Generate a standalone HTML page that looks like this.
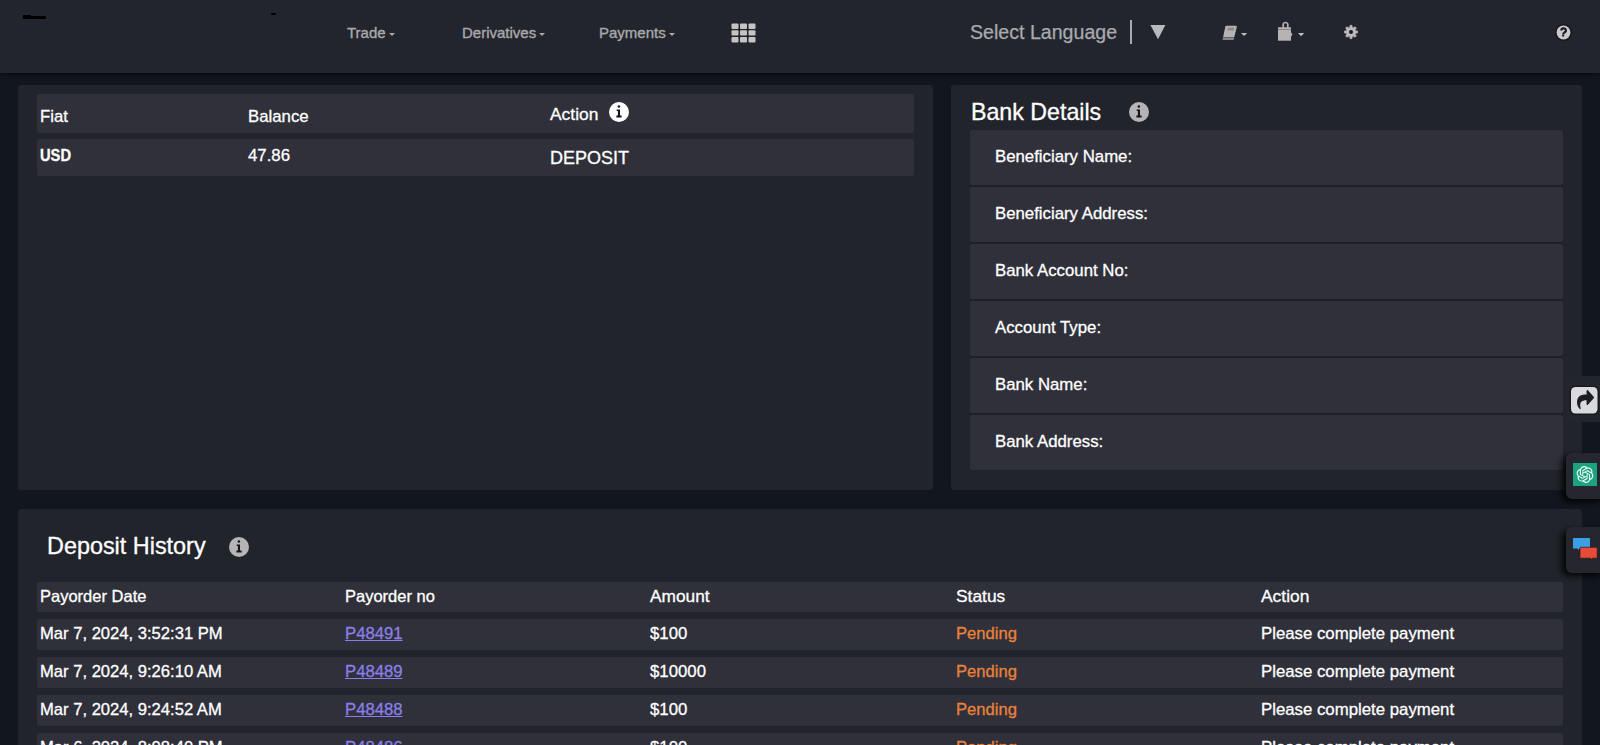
<!DOCTYPE html>
<html><head><meta charset="utf-8">
<style>
*{box-sizing:border-box;margin:0;padding:0}
html,body{width:1600px;height:745px;overflow:hidden;background:#12161f;font-family:"Liberation Sans",sans-serif;color:#fff}
.abs{position:absolute}
#hdr{position:absolute;left:0;top:0;width:1600px;height:73px;background:#23252e;box-shadow:0 2px 4px rgba(0,0,0,.5)}
.nav{position:absolute;top:24px;font-size:15px;color:#aaaaaa;white-space:nowrap;line-height:17px;-webkit-text-stroke:0.35px currentColor}
.caret{display:inline-block;width:0;height:0;border-left:3.5px solid transparent;border-right:3.5px solid transparent;border-top:3.5px solid #aaa;vertical-align:middle;margin-left:3px;margin-top:1px}
.card{position:absolute;background:#22242c;border-radius:3px}
.row{position:absolute;background:#30303a;border-radius:2px}
.t{position:absolute;white-space:nowrap;font-size:16.8px;line-height:20px;color:#fff;-webkit-text-stroke:0.3px currentColor}
.info{position:absolute;width:20px;height:20px}
.side{position:absolute;left:1566px;width:40px;height:46px;background:#26272e;border-radius:6px;box-shadow:-4px 3px 6px rgba(0,0,0,.85)}
</style></head><body>
<div id="hdr">
  <div class="abs" style="left:23px;top:15px;width:8px;height:4px;background:#000"></div>
  <div class="abs" style="left:31px;top:15.5px;width:8px;height:3.5px;background:#000"></div>
  <div class="abs" style="left:39px;top:16px;width:7px;height:2.5px;background:#000"></div>
  <div class="abs" style="left:271px;top:13px;width:5px;height:2px;border-radius:2px;background:#000"></div>

  <div class="nav" style="left:347px">Trade<span class="caret"></span></div>
  <div class="nav" style="left:462px">Derivatives<span class="caret"></span></div>
  <div class="nav" style="left:599px">Payments<span class="caret"></span></div>
  <svg class="abs" style="left:731px;top:23px" width="25" height="20" viewBox="0 0 25 20">
    <g fill="#c6c3c3">
      <rect x="0.5" y="0.5" width="7" height="5.5" rx="1"/><rect x="9" y="0.5" width="7" height="5.5" rx="1"/><rect x="17.5" y="0.5" width="7" height="5.5" rx="1"/>
      <rect x="0.5" y="7.3" width="7" height="5.3" rx="1"/><rect x="9" y="7.3" width="7" height="5.3" rx="1"/><rect x="17.5" y="7.3" width="7" height="5.3" rx="1"/>
      <rect x="0.5" y="14" width="7" height="5.5" rx="1"/><rect x="9" y="14" width="7" height="5.5" rx="1"/><rect x="17.5" y="14" width="7" height="5.5" rx="1"/>
    </g>
  </svg>
  <div class="abs" style="left:970px;top:20px;font-size:19.6px;line-height:24px;color:#a9aaad;white-space:nowrap;-webkit-text-stroke:0.25px currentColor">Select Language</div>
  <div class="abs" style="left:1130px;top:20px;width:2px;height:24px;background:#aaa"></div>
  <svg class="abs" style="left:1150px;top:24px" width="16" height="16" viewBox="0 0 16 16"><path d="M0.4 0.9 L15.4 0.9 L8 15.3 Z" fill="#b9b9c0"/></svg>
  <!-- book -->
  <svg class="abs" style="left:1220px;top:24px" width="30" height="18" viewBox="0 0 30 18">
    <path d="M5.5 2 Q6 1.8 6.8 1.8 L16 1.8 Q17.2 2 16.8 3 L14.2 13.5 L3 13.5 Z" fill="#b8b3b3"/>
    <path d="M8 3.5 L14.5 3.5 L13.8 6.5 L7.3 6.5 Z" fill="#8f8a8a"/>
    <path d="M3 13.5 L14.2 13.5 L13.8 15.7 L2.8 15.7 Q2.3 14.6 3 13.5 Z" fill="#5a5758"/>
    <path d="M2.8 14.4 L13.8 14.4 L13.6 15.6 L2.8 15.6 Z" fill="#c4c0c0"/>
    <path d="M21 9 L27.2 9 L24.1 12.1 Z" fill="#c0bdbd"/>
  </svg>
  <!-- bag -->
  <svg class="abs" style="left:1276px;top:20px" width="30" height="22" viewBox="0 0 30 22">
    <path d="M7.2 8 V4 A2.5 2.5 0 0 1 11.8 4 V8" stroke="#b8b3b3" stroke-width="1.7" fill="none"/>
    <rect x="2" y="7.3" width="13" height="13.4" fill="#b8b3b3"/>
    <rect x="2" y="9.2" width="13" height="0.8" fill="#7d797a"/>
    <path d="M15 13 Q16.4 14.5 15 16" stroke="#b8b3b3" stroke-width="1.2" fill="none"/>
    <path d="M22 13 L28.2 13 L25.1 16.2 Z" fill="#c0bdbd"/>
  </svg>
  <!-- gear -->
  <svg class="abs" style="left:1342.7px;top:24.4px" width="16" height="16" viewBox="0 0 16 16">
    <path d="M6.53 3.75 L7.07 1.37 L8.93 1.37 L9.47 3.75 L9.97 3.96 L12.03 2.65 L13.35 3.97 L12.04 6.03 L12.25 6.53 L14.63 7.07 L14.63 8.93 L12.25 9.47 L12.04 9.97 L13.35 12.03 L12.03 13.35 L9.97 12.04 L9.47 12.25 L8.93 14.63 L7.07 14.63 L6.53 12.25 L6.03 12.04 L3.97 13.35 L2.65 12.03 L3.96 9.97 L3.75 9.47 L1.37 8.93 L1.37 7.07 L3.75 6.53 L3.96 6.03 L2.65 3.97 L3.97 2.65 L6.03 3.96 Z" fill="#bdb8b9" stroke="#bdb8b9" stroke-width="0.6" stroke-linejoin="round"/>
    <circle cx="8" cy="8" r="2" fill="#1a1a1e"/>
  </svg>
  <!-- help -->
  <svg class="abs" style="left:1554.1px;top:23px" width="19" height="19" viewBox="0 0 19 19">
    <circle cx="9.5" cy="9.5" r="8.6" fill="#17181e"/>
    <circle cx="9.5" cy="9.5" r="6.9" fill="#cbc9ca"/>
    <path d="M7.3 7.5 A2.3 2.1 0 1 1 10.5 9.4 C9.6 9.9 9.3 10.4 9.2 11.4" stroke="#1d1e24" stroke-width="2.2" fill="none"/>
    <rect x="8.1" y="11.6" width="2.1" height="1.9" fill="#1d1e24"/>
  </svg>
</div>

<!-- left card -->
<div class="card" style="left:18px;top:85px;width:915px;height:405px"></div>
<div class="row" style="left:37px;top:94px;width:877px;height:39px"></div>
<div class="row" style="left:37px;top:139px;width:877px;height:37px"></div>
<div class="t" style="left:40px;top:107px">Fiat</div>
<div class="t" style="left:248px;top:107px">Balance</div>
<div class="t" style="left:550px;top:104px;font-size:17.4px">Action</div>
<div class="info" style="left:609.2px;top:101.8px"><svg width="20" height="20" viewBox="0 0 20 20"><circle cx="10" cy="10" r="10" fill="#ffffff"/><circle cx="9.9" cy="4.6" r="1.25" fill="#151518"/><path d="M7.7 7.4 H11 V13.6 H12.6 V15.4 H7.4 V13.6 H8.9 V9 H7.7 Z" fill="#151518"/></svg></div>
<div class="t" style="left:40px;top:146px;font-weight:bold;font-size:16.9px;transform:scaleX(0.87);transform-origin:0 0">USD</div>
<div class="t" style="left:248px;top:146px">47.86</div>
<div class="t" style="left:550px;top:146px;font-size:18px;line-height:24px">DEPOSIT</div>

<!-- right card -->
<div class="card" style="left:951px;top:85px;width:631px;height:405px"></div>
<div class="t" style="left:971px;top:99px;font-size:23.2px;line-height:26px">Bank Details</div>
<div class="info" style="left:1129px;top:102px"><svg width="20" height="20" viewBox="0 0 20 20"><circle cx="10" cy="10" r="10" fill="#b6b4b6"/><circle cx="9.9" cy="4.6" r="1.25" fill="#151518"/><path d="M7.7 7.4 H11 V13.6 H12.6 V15.4 H7.4 V13.6 H8.9 V9 H7.7 Z" fill="#151518"/></svg></div>
<div class="abs" style="left:970px;top:130px;width:593px;height:340px;background:#1f2027;border-radius:2px"></div>
<div class="row" style="left:970px;top:130px;width:593px;height:55px"></div>
<div class="row" style="left:970px;top:187px;width:593px;height:55px"></div>
<div class="row" style="left:970px;top:244px;width:593px;height:55px"></div>
<div class="row" style="left:970px;top:301px;width:593px;height:55px"></div>
<div class="row" style="left:970px;top:358px;width:593px;height:55px"></div>
<div class="row" style="left:970px;top:415px;width:593px;height:55px"></div>
<div class="t" style="left:995px;top:147px">Beneficiary Name:</div>
<div class="t" style="left:995px;top:204px">Beneficiary Address:</div>
<div class="t" style="left:995px;top:261px">Bank Account No:</div>
<div class="t" style="left:995px;top:318px">Account Type:</div>
<div class="t" style="left:995px;top:375px">Bank Name:</div>
<div class="t" style="left:995px;top:432px">Bank Address:</div>

<!-- bottom card -->
<div class="card" style="left:18px;top:509px;width:1564px;height:300px"></div>
<div class="t" style="left:47px;top:532px;font-size:23.4px;line-height:28px">Deposit History</div>
<div class="info" style="left:229px;top:537px"><svg width="20" height="20" viewBox="0 0 20 20"><circle cx="10" cy="10" r="10" fill="#b6b4b6"/><circle cx="9.9" cy="4.6" r="1.25" fill="#151518"/><path d="M7.7 7.4 H11 V13.6 H12.6 V15.4 H7.4 V13.6 H8.9 V9 H7.7 Z" fill="#151518"/></svg></div>
<div class="row" style="left:37px;top:582px;width:1526px;height:30px"></div>
<div class="row" style="left:37px;top:619px;width:1526px;height:31px"></div>
<div class="row" style="left:37px;top:657px;width:1526px;height:31px"></div>
<div class="row" style="left:37px;top:695px;width:1526px;height:31px"></div>
<div class="row" style="left:37px;top:733px;width:1526px;height:31px"></div>

<div class="t" style="left:40px;top:586px;font-size:16.5px">Payorder Date</div>
<div class="t" style="left:345px;top:586px;font-size:16.5px">Payorder no</div>
<div class="t" style="left:650px;top:586px;font-size:17.3px">Amount</div>
<div class="t" style="left:956px;top:586px;font-size:17.4px">Status</div>
<div class="t" style="left:1261px;top:586px;font-size:17.4px">Action</div>

<div class="t" style="left:40px;top:624px;font-size:16.6px">Mar 7, 2024, 3:52:31 PM</div>
<div class="t" style="left:345px;top:624px;color:#8a7ee8;text-decoration:underline;font-size:16.7px">P48491</div>
<div class="t" style="left:650px;top:624px">$100</div>
<div class="t" style="left:956px;top:624px;color:#e9823a;font-size:16.6px">Pending</div>
<div class="t" style="left:1261px;top:624px">Please complete payment</div>

<div class="t" style="left:40px;top:662px;font-size:16.6px">Mar 7, 2024, 9:26:10 AM</div>
<div class="t" style="left:345px;top:662px;color:#8a7ee8;text-decoration:underline;font-size:16.7px">P48489</div>
<div class="t" style="left:650px;top:662px">$10000</div>
<div class="t" style="left:956px;top:662px;color:#e9823a;font-size:16.6px">Pending</div>
<div class="t" style="left:1261px;top:662px">Please complete payment</div>

<div class="t" style="left:40px;top:700px;font-size:16.6px">Mar 7, 2024, 9:24:52 AM</div>
<div class="t" style="left:345px;top:700px;color:#8a7ee8;text-decoration:underline;font-size:16.7px">P48488</div>
<div class="t" style="left:650px;top:700px">$100</div>
<div class="t" style="left:956px;top:700px;color:#e9823a;font-size:16.6px">Pending</div>
<div class="t" style="left:1261px;top:700px">Please complete payment</div>

<div class="t" style="left:40px;top:738px;font-size:16.6px">Mar 6, 2024, 8:08:40 PM</div>
<div class="t" style="left:345px;top:738px;color:#8a7ee8;text-decoration:underline;font-size:16.7px">P48486</div>
<div class="t" style="left:650px;top:738px">$100</div>
<div class="t" style="left:956px;top:738px;color:#e9823a;font-size:16.6px">Pending</div>
<div class="t" style="left:1261px;top:738px">Please complete payment</div>

<!-- side buttons -->
<div class="side" style="top:376px;box-shadow:none;background:#23252d"></div>
<div class="side" style="top:453px"></div>
<div class="side" style="top:527px"></div>
<svg class="abs" style="left:1569px;top:385px" width="31" height="31" viewBox="0 0 31 31">
  <rect x="1.3" y="1.3" width="27.9" height="27.9" rx="5" fill="none" stroke="#15161c" stroke-width="1.2"/>
  <rect x="2" y="2" width="26.5" height="26.5" rx="4.5" fill="#d9d9de"/>
  <g transform="translate(8 3.63) scale(0.0332 0.0427)"><path fill="#1c1d24" d="M503.691 189.836L327.687 37.851C312.281 24.546 288 35.347 288 56.015v80.053C127.371 137.907 0 170.1 0 322.326c0 61.441 39.581 122.309 83.333 154.132 13.653 9.931 33.111-2.533 28.077-18.631C66.066 312.814 132.917 274.316 288 272.085V360c0 20.7 24.3 31.453 39.687 18.164l176.004-152c11.071-9.562 11.086-26.753 0-36.328z"/></g>
</svg>
<svg class="abs" style="left:1573px;top:463px" width="24" height="23" viewBox="0 0 24 23">
  <rect width="24" height="23" fill="#1aa37e"/>
  <g transform="translate(3.6 3.1) scale(0.7)">
  <path fill="#fff" d="M22.2819 9.8211a5.9847 5.9847 0 0 0-.5157-4.9108 6.0462 6.0462 0 0 0-6.5098-2.9A6.0651 6.0651 0 0 0 4.9807 4.1818a5.9847 5.9847 0 0 0-3.9977 2.9 6.0462 6.0462 0 0 0 .7427 7.0966 5.98 5.98 0 0 0 .511 4.9107 6.051 6.051 0 0 0 6.5146 2.9001A5.9847 5.9847 0 0 0 13.2599 24a6.0557 6.0557 0 0 0 5.7718-4.2058 5.9894 5.9894 0 0 0 3.9977-2.9001 6.0557 6.0557 0 0 0-.7475-7.0729zm-9.022 12.6081a4.4755 4.4755 0 0 1-2.8764-1.0408l.1419-.0804 4.7783-2.7582a.7948.7948 0 0 0 .3927-.6813v-6.7369l2.02 1.1686a.071.071 0 0 1 .038.052v5.5826a4.504 4.504 0 0 1-4.4945 4.4944zm-9.6607-4.1254a4.4708 4.4708 0 0 1-.5346-3.0137l.142.0852 4.783 2.7582a.7712.7712 0 0 0 .7806 0l5.8428-3.3685v2.3324a.0804.0804 0 0 1-.0332.0615L9.74 19.9502a4.4992 4.4992 0 0 1-6.1408-1.6464zM2.3408 7.8956a4.485 4.485 0 0 1 2.3655-1.9728V11.6a.7664.7664 0 0 0 .3879.6765l5.8144 3.3543-2.0201 1.1685a.0757.0757 0 0 1-.071 0l-4.8303-2.7865A4.504 4.504 0 0 1 2.3408 7.872zm16.5963 3.8558L13.1038 8.364 15.1192 7.2a.0757.0757 0 0 1 .071 0l4.8303 2.7913a4.4944 4.4944 0 0 1-.6765 8.1042v-5.6772a.79.79 0 0 0-.407-.667zm2.0107-3.0231l-.142-.0852-4.7735-2.7818a.7759.7759 0 0 0-.7854 0L9.409 9.2297V6.8974a.0662.0662 0 0 1 .0284-.0615l4.8303-2.7866a4.4992 4.4992 0 0 1 6.6802 4.66zM8.3065 12.863l-2.02-1.1638a.0804.0804 0 0 1-.038-.0567V6.0742a4.4992 4.4992 0 0 1 7.3757-3.4537l-.142.0805L8.704 5.459a.7948.7948 0 0 0-.3927.6813zm1.0976-2.3654l2.602-1.4998 2.6069 1.4998v2.9994l-2.5974 1.4997-2.6067-1.4997Z"/>
  </g>
</svg>
<svg class="abs" style="left:1572px;top:537px" width="27" height="25" viewBox="0 0 27 25">
  <path d="M1.6 1 H17.4 Q18 1 18 1.6 V11 Q18 11.6 17.4 11.6 H7.5 L6.3 13 L5.6 11.6 H1.6 Q1 11.6 1 11 V1.6 Q1 1 1.6 1 Z" fill="#3d9fe3"/>
  <path d="M8.6 10.3 H24.6 Q25.2 10.3 25.2 10.9 V20.6 Q25.2 21.2 24.6 21.2 H20.2 L19.3 22.8 L18.4 21.2 H8.6 Q8 21.2 8 20.6 V10.9 Q8 10.3 8.6 10.3 Z" fill="#e94b37" stroke="#1d1e25" stroke-width="0.7"/>
</svg>
</body></html>
